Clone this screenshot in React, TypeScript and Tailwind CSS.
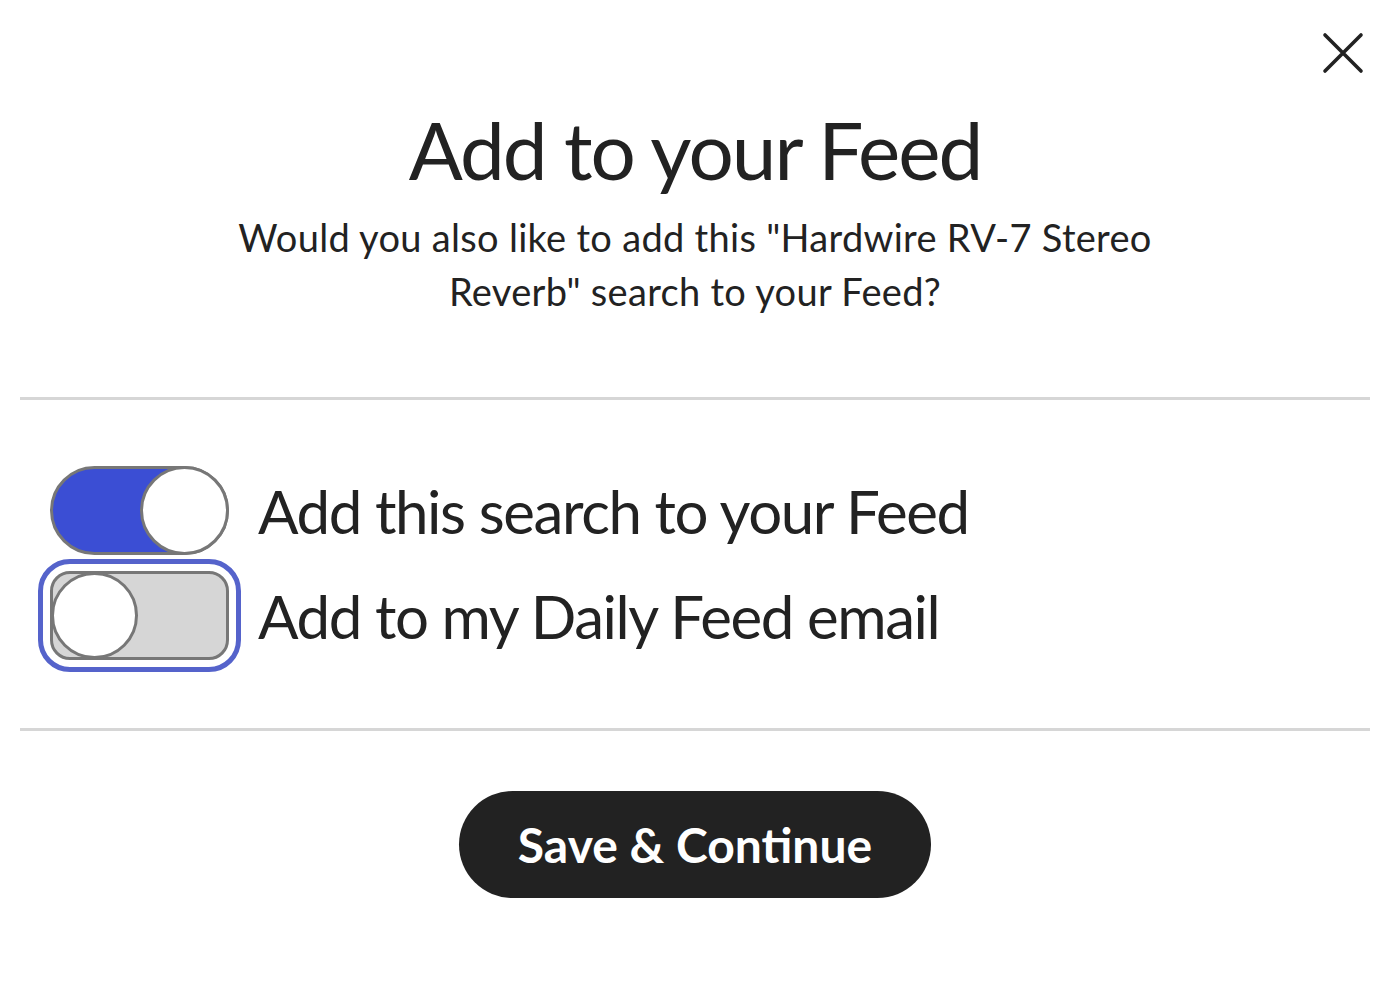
import React from "react";

export default function App() {
  return (
    <div
      className="relative w-full h-[984px] bg-white text-[#222] pl-[20px] pr-[28px]"
      style={{ fontFamily: "Lato, 'Open Sans', sans-serif" }}
    >
      <button
        aria-label="Close"
        className="absolute right-[34px] top-[32px] w-[42px] h-[42px] flex items-center justify-center"
      >
        <svg width="42" height="42" viewBox="0 0 42 42" fill="none">
          <path d="M3 3 L39 39 M39 3 L3 39" stroke="#222" strokeWidth="3.6" strokeLinecap="round" />
        </svg>
      </button>

      <div className="flex flex-col items-center pt-[101px]">
        <h1 className="text-[80px] leading-[96px] font-normal tracking-[-2px]">Add to your Feed</h1>
        <p className="mt-[13px] max-w-[960px] text-center text-[38px] leading-[54px] tracking-[0.3px]">
          Would you also like to add this "Hardwire RV-7 Stereo Reverb" search to your Feed?
        </p>
      </div>

      <div className="mt-[79px] h-[3px] bg-[#d6d6d6]" />

      <div className="flex flex-col gap-[16px] pl-[30px] pt-[66px] pb-[68px]">
        <div className="flex items-center gap-[29px]">
          <div className="relative w-[179px] h-[89px] rounded-full bg-[#3b4ed4] border-[3px] border-[#777] shrink-0">
            <div className="absolute right-[-3px] top-[-3px] w-[89px] h-[89px] rounded-full bg-white border-[3px] border-[#777]" />
          </div>
          <span className="text-[60px] leading-[72px] tracking-[-1.4px]">Add this search to your Feed</span>
        </div>
        <div className="flex items-center gap-[29px]">
          <div className="relative w-[179px] h-[89px] rounded-[20px] bg-[#d6d6d6] border-[3px] border-[#777] shrink-0 outline-[5px] outline-solid outline-[#5563cb] outline-offset-[7px]">
            <div className="absolute left-[-2px] top-[-2px] w-[87px] h-[87px] rounded-full bg-white border-[3px] border-[#777]" />
          </div>
          <span className="text-[60px] leading-[72px] tracking-[-1.4px]">Add to my Daily Feed email</span>
        </div>
      </div>

      <div className="h-[3px] bg-[#d6d6d6]" />

      <div className="flex justify-center pt-[60px]">
        <button className="w-[472px] h-[107px] rounded-full bg-[#222] text-white text-[48px] font-bold">
          Save &amp; Continue
        </button>
      </div>
    </div>
  );
}
